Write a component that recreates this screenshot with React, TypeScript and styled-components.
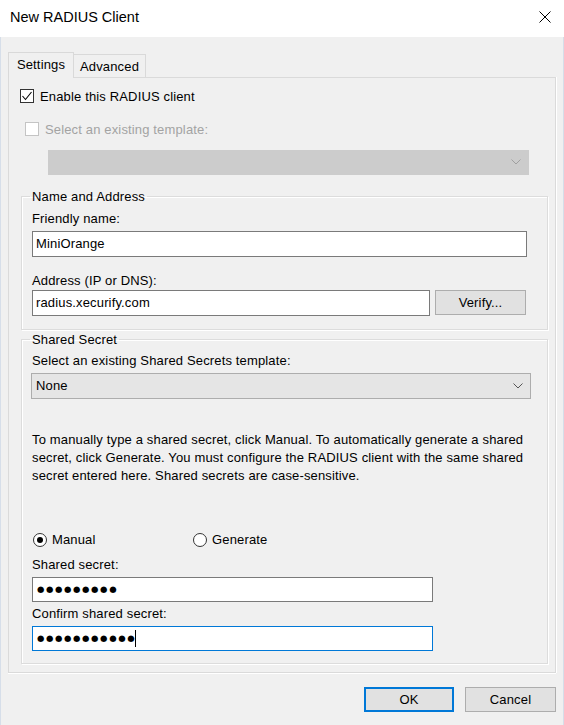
import React from 'react';
import styled, { createGlobalStyle } from 'styled-components';

const GlobalStyle = createGlobalStyle`
  html, body {
    margin: 0;
    padding: 0;
    background: #f0f0f0;
  }
  body {
    font-family: 'Liberation Sans', Arial, sans-serif;
    font-size: 13px;
    letter-spacing: 0.15px;
    color: #111;
  }
  * {
    box-sizing: border-box;
  }
`;

const Window = styled.div`
  width: 564px;
  height: 725px;
  background: #f0f0f0;
  box-shadow: inset 1px 0 #d6dee9, inset -1px 0 #d6dee9;
  display: flex;
  flex-direction: column;
`;

const TitleBar = styled.div`
  height: 37px;
  background: #fff;
  display: flex;
  justify-content: space-between;
  align-items: flex-start;
  padding: 9px 13px 0 10px;
`;

const Title = styled.div`
  font-size: 14.5px;
  letter-spacing: 0;
  line-height: 17px;
  color: #000;
`;

const CloseButton = styled.button`
  border: none;
  background: transparent;
  padding: 0;
  margin-top: 2px;
  width: 12px;
  height: 12px;
  display: flex;
`;

const Body = styled.div`
  padding: 15px 8px 0;
  display: flex;
  flex-direction: column;
`;

const TabStrip = styled.div`
  display: flex;
  align-items: flex-end;
  height: 25px;
`;

const Tab = styled.div<{ $active?: boolean; $width: number }>`
  width: ${p => p.$width}px;
  height: ${p => (p.$active ? 26 : 23)}px;
  margin-bottom: ${p => (p.$active ? -1 : 0)}px;
  margin-left: ${p => (p.$active ? 0 : -1)}px;
  position: relative;
  z-index: ${p => (p.$active ? 1 : 0)};
  background: #f0f0f0;
  border: 1px solid #d9d9d9;
  border-bottom: none;
  display: flex;
  justify-content: center;
  align-items: center;
  padding-bottom: ${p => (p.$active ? 3 : 0)}px;
  color: #000;
`;

const Panel = styled.div`
  width: 548px;
  height: 596px;
  border: 1px solid #dadada;
  box-shadow: 0 1px #fff, 1px 0 #fff;
  background: #f0f0f0;
  padding: 0 8px 8px 11px;
  display: flex;
  flex-direction: column;
`;

const CheckRow = styled.label<{ $mt: number; $ml?: number; $disabled?: boolean }>`
  display: flex;
  align-items: center;
  gap: 6px;
  margin-top: ${p => p.$mt}px;
  margin-left: ${p => p.$ml ?? 0}px;
  height: 14px;
  color: ${p => (p.$disabled ? '#a3a3a3' : '#000')};
`;

const CheckBox = styled.span<{ $disabled?: boolean }>`
  width: 14px;
  height: 14px;
  border: 1px solid ${p => (p.$disabled ? '#c4c4c4' : '#333')};
  background: #fff;
  display: flex;
  align-items: center;
  justify-content: center;
`;

const Select = styled.div<{ $disabled?: boolean; $mt: number; $ml: number; $width: number; $height: number }>`
  margin-top: ${p => p.$mt}px;
  margin-left: ${p => p.$ml}px;
  width: ${p => p.$width}px;
  height: ${p => p.$height}px;
  background: ${p => (p.$disabled ? '#cccccc' : '#e5e5e5')};
  border: 1px solid ${p => (p.$disabled ? '#cccccc' : '#adadad')};
  display: flex;
  align-items: center;
  justify-content: space-between;
  padding: 0 7px 0 4px;
  color: #000;
`;

const Group = styled.fieldset<{ $mt: number; $pb: number; $height: number }>`
  margin: ${p => p.$mt}px 0 0 1px;
  padding: 0 0 ${p => p.$pb}px 10px;
  width: 527px;
  height: ${p => p.$height}px;
  min-width: 0;
  border: 1px solid #dcdcdc;
  box-shadow: inset 1px 1px #fff, 1px 1px #fff;
  display: flex;
  flex-direction: column;
`;

const Legend = styled.legend`
  padding: 0 2px;
  margin-left: -2px;
  line-height: 16px;
  color: #000;
`;

const Label = styled.div<{ $mt: number }>`
  margin-top: ${p => p.$mt}px;
  line-height: 16px;
  color: #000;
`;

const TextBox = styled.div<{ $width: number; $height: number; $focused?: boolean; $mt?: number }>`
  width: ${p => p.$width}px;
  height: ${p => p.$height}px;
  margin-top: ${p => p.$mt ?? 0}px;
  background: #fff;
  border: 1px solid ${p => (p.$focused ? '#0078d7' : '#7a7a7a')};
  display: flex;
  align-items: center;
  padding-left: 3px;
  color: #000;
  flex-shrink: 0;
`;

const Dots = styled.span`
  font-family: 'DejaVu Sans', sans-serif;
  font-size: 8.5px;
  letter-spacing: 1.6px;
  line-height: 1;
  padding-left: 1px;
`;

const Caret = styled.span`
  width: 1px;
  height: 17px;
  margin-left: -1px;
  background: #000;
`;

const FieldRow = styled.div<{ $mt: number }>`
  display: flex;
  gap: 5px;
  margin-top: ${p => p.$mt}px;
`;

const Button = styled.button<{ $default?: boolean; $width: number }>`
  width: ${p => p.$width}px;
  height: 25px;
  background: #e1e1e1;
  border: ${p => (p.$default ? '2px solid #0078d7' : '1px solid #adadad')};
  font-family: inherit;
  font-size: 13px;
  letter-spacing: 0.15px;
  color: #000;
  padding: 0;
`;

const Paragraph = styled.p`
  margin: 32px 0 0;
  line-height: 18px;
  color: #000;
`;

const RadioRow = styled.div`
  display: flex;
  margin-top: 47px;
  margin-left: 1px;
  height: 16px;
`;

const RadioOption = styled.label<{ $width?: number }>`
  display: flex;
  align-items: center;
  gap: 5px;
  width: ${p => (p.$width ? `${p.$width}px` : 'auto')};
  color: #000;
`;

const RadioCircle = styled.span<{ $checked?: boolean }>`
  width: 14px;
  height: 14px;
  border-radius: 50%;
  border: 1px solid #333;
  background: #fff;
  display: flex;
  align-items: center;
  justify-content: center;
  &::after {
    content: '';
    width: 6px;
    height: 6px;
    border-radius: 50%;
    background: ${p => (p.$checked ? '#000' : 'transparent')};
  }
`;

const ButtonRow = styled.div`
  display: flex;
  justify-content: flex-end;
  gap: 11px;
  margin-top: 14px;
`;

const Chevron = ({ color }: { color: string }) => (
  <svg width="10" height="6" viewBox="0 0 10 6">
    <polyline points="0.5,0.5 5,5 9.5,0.5" fill="none" stroke={color} strokeWidth="1" />
  </svg>
);

export default function App() {
  return (
    <>
      <GlobalStyle />
      <Window>
        <TitleBar>
          <Title>New RADIUS Client</Title>
          <CloseButton aria-label="Close">
            <svg width="12" height="12" viewBox="0 0 12 12">
              <path d="M0.5 0.5 L11.5 11.5 M11.5 0.5 L0.5 11.5" stroke="#000" strokeWidth="1" />
            </svg>
          </CloseButton>
        </TitleBar>

        <Body>
          <TabStrip>
            <Tab $active $width={66}>Settings</Tab>
            <Tab $width={73}>Advanced</Tab>
          </TabStrip>

          <Panel>
            <CheckRow $mt={11}>
              <CheckBox>
                <svg width="12" height="12" viewBox="0 0 12 12">
                  <polyline points="1.5,6 4.5,9.5 10.5,2" fill="none" stroke="#000" strokeWidth="1.1" />
                </svg>
              </CheckBox>
              Enable this RADIUS client
            </CheckRow>

            <CheckRow $mt={19} $ml={5} $disabled>
              <CheckBox $disabled />
              Select an existing template:
            </CheckRow>

            <Select $disabled $mt={14} $ml={28} $width={481} $height={25}>
              <span />
              <Chevron color="#a0a0a0" />
            </Select>

            <Group $mt={14} $pb={12} $height={141}>
              <Legend>Name and Address</Legend>
              <Label $mt={6}>Friendly name:</Label>
              <TextBox $width={495} $height={26} $mt={4}>MiniOrange</TextBox>
              <Label $mt={16}>Address (IP or DNS):</Label>
              <FieldRow $mt={1}>
                <TextBox $width={398} $height={26}>radius.xecurify.com</TextBox>
                <Button $width={91}>Verify...</Button>
              </FieldRow>
            </Group>

            <Group $mt={2} $pb={11} $height={333}>
              <Legend>Shared Secret</Legend>
              <Label $mt={5}>Select an existing Shared Secrets template:</Label>
              <Select $mt={4} $ml={-1} $width={500} $height={26}>
                <span>None</span>
                <Chevron color="#555" />
              </Select>
              <Paragraph>
                To manually type a shared secret, click Manual. To automatically generate a shared
                <br />
                secret, click Generate. You must configure the RADIUS client with the same shared
                <br />
                secret entered here. Shared secrets are case-sensitive.
              </Paragraph>
              <RadioRow>
                <RadioOption $width={160}>
                  <RadioCircle $checked />
                  Manual
                </RadioOption>
                <RadioOption>
                  <RadioCircle />
                  Generate
                </RadioOption>
              </RadioRow>
              <Label $mt={9}>Shared secret:</Label>
              <TextBox $width={401} $height={25} $mt={4}>
                <Dots>●●●●●●●●●</Dots>
              </TextBox>
              <Label $mt={4}>Confirm shared secret:</Label>
              <TextBox $width={401} $height={25} $mt={4} $focused>
                <Dots>●●●●●●●●●●●</Dots>
                <Caret />
              </TextBox>
            </Group>
          </Panel>

          <ButtonRow>
            <Button $default $width={90}>OK</Button>
            <Button $width={91}>Cancel</Button>
          </ButtonRow>
        </Body>
      </Window>
    </>
  );
}
